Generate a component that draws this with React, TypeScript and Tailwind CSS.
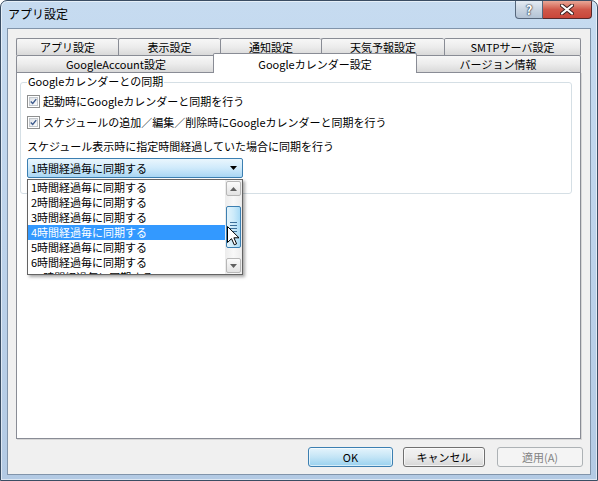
import React from "react";

function Tab({ label, w, last }: { label: string; w: number; last?: boolean }) {
  return (
    <div
      style={{ width: w }}
      className={
        "h-full flex items-center justify-center border-t border-l border-[#898c95] rounded-t-[2px] bg-gradient-to-b from-[#f7f7f7] via-[#ececec] to-[#d9d9d9] " +
        (last ? "border-r" : "")
      }
    >
      <span className="leading-none">{label}</span>
    </div>
  );
}

function CheckBox() {
  return (
    <div className="w-[13px] h-[13px] border border-[#8e8f8f] bg-white p-[1px] shrink-0">
      <div className="w-full h-full border border-[#c2c7cc] bg-gradient-to-br from-[#dfe3e8] to-[#fbfbfb] flex items-center justify-center">
        <svg width="9" height="9" viewBox="0 0 9 9">
          <path d="M1 4.5 L3.5 7 L8 1.5" fill="none" stroke="#3d5a8c" strokeWidth="1.8" />
        </svg>
      </div>
    </div>
  );
}

function ScrollBtn({ up }: { up?: boolean }) {
  return (
    <div className="h-[17px] p-[1px]">
      <div className="w-full h-full rounded-[2px] border border-[#b7b7b7] bg-gradient-to-b from-[#fbfbfb] to-[#e3e3e3] flex items-center justify-center">
        <svg width="7" height="4" viewBox="0 0 7 4">
          {up ? <path d="M0 4 L3.5 0 L7 4 Z" fill="#606060" /> : <path d="M0 0 L7 0 L3.5 4 Z" fill="#606060" />}
        </svg>
      </div>
    </div>
  );
}

const items = [
  "1時間経過毎に同期する",
  "2時間経過毎に同期する",
  "3時間経過毎に同期する",
  "4時間経過毎に同期する",
  "5時間経過毎に同期する",
  "6時間経過毎に同期する",
  "10時間経過毎に同期する",
];

export default function App() {
  return (
    <div className="w-[598px] h-[481px] bg-white">
      <div className="relative w-[598px] h-[481px] rounded-t-[7px] border border-[#3a4d63] bg-gradient-to-b from-[#c6dbf0] via-[#bdd3eb] to-[#b3cae4] shadow-[inset_0_0_0_1px_rgba(255,255,255,0.55)] flex flex-col font-['Noto_Sans_CJK_JP','Noto_Sans',sans-serif] text-[11px] text-black leading-none overflow-hidden">
        {/* title bar */}
        <div className="h-[27px] shrink-0 flex items-start">
          <div className="pl-[7px] pt-[7px] text-[12px] leading-none text-black">アプリ設定</div>
          <div className="ml-auto mr-[5px] flex">
            <div className="w-[28px] h-[18px] rounded-bl-[4px] border border-t-0 border-[#56677c] bg-gradient-to-b from-[#e4ebf3] via-[#c9d5e2] to-[#b3c3d5] flex items-center justify-center">
              <span className="text-[13px] font-bold text-white leading-none [text-shadow:0_0_1px_#2a3a4c,0_0_1px_#2a3a4c,0_0_2px_#2a3a4c]">?</span>
            </div>
            <div className="w-[49px] h-[18px] rounded-br-[4px] border border-l-0 border-t-0 border-[#56282a] bg-gradient-to-b from-[#e8a797] via-[#d0584a] to-[#c9463a] flex items-center justify-center">
              <svg width="14" height="11" viewBox="0 0 14 11">
                <path d="M2 1.5 L12 9.5 M12 1.5 L2 9.5" stroke="#3b2020" strokeWidth="4" strokeLinecap="round" />
                <path d="M2 1.5 L12 9.5 M12 1.5 L2 9.5" stroke="#ffffff" strokeWidth="2.2" strokeLinecap="round" />
              </svg>
            </div>
          </div>
        </div>

        {/* client */}
        <div className="ml-[6px] w-[584px] h-[447px] shrink-0 border border-[#8194aa] bg-[#f0f0f0] pt-[9px] pl-[8px] flex flex-col">
          <div className="relative w-[565px]">
            <div className="flex h-[17px]">
              <Tab label="アプリ設定" w={102} />
              <Tab label="表示設定" w={102} />
              <Tab label="通知設定" w={101} />
              <Tab label="天気予報設定" w={123} />
              <Tab label="SMTPサーバ設定" w={137} last />
            </div>
            <div className="flex h-[17px]">
              <Tab label="GoogleAccount設定" w={199} />
              <Tab label="Googleカレンダー設定" w={200} />
              <Tab label="バージョン情報" w={166} last />
            </div>
            <div className="absolute left-[197px] top-[15px] w-[204px] h-[20px] z-10 bg-white border-t border-l border-r border-[#898c95] rounded-t-[2px] flex items-start justify-center pt-[5px]">
              <span className="leading-none">Googleカレンダー設定</span>
            </div>

            {/* panel */}
            <div className="w-[565px] h-[367px] border border-[#898c95] bg-white shadow-[1px_1px_0_#d6d6d6] pt-[9px] pl-[3px]">
              {/* groupbox */}
              <div className="relative w-[552px] h-[112px] border border-[#d5dfe5] rounded-[3px]">
                <div className="absolute left-[6px] top-[-7px] bg-white px-[1px] leading-none">
                  Googleカレンダーとの同期
                </div>
                <div className="flex flex-col pl-[6px] pt-[12px]">
                  <div className="flex items-center gap-[3px] h-[13px]">
                    <CheckBox />
                    <span>起動時にGoogleカレンダーと同期を行う</span>
                  </div>
                  <div className="flex items-center gap-[3px] h-[13px] mt-[8px]">
                    <CheckBox />
                    <span>スケジュールの追加／編集／削除時にGoogleカレンダーと同期を行う</span>
                  </div>
                  <div className="mt-[12px] h-[11px] leading-none">
                    スケジュール表示時に指定時間経過していた場合に同期を行う
                  </div>
                  {/* combo */}
                  <div className="relative mt-[6px] w-[216px] h-[20px]">
                    <div className="w-full h-full border border-[#3c7fb1] rounded-[2px] bg-gradient-to-b from-[#eaf6fd] via-[#cfeafb] to-[#a9d6f3] flex items-center pl-[3px] pr-[5px]">
                      <span className="flex-1">1時間経過毎に同期する</span>
                      <svg width="7" height="4" viewBox="0 0 7 4">
                        <path d="M0 0 L7 0 L3.5 4 Z" fill="#000" />
                      </svg>
                    </div>
                    {/* dropdown list */}
                    <div className="absolute left-0 top-[21px] z-20 w-[216px] h-[96px] border border-[#646464] bg-white shadow-[2px_2px_3px_rgba(0,0,0,0.35)] flex">
                      <div className="w-[197px] h-full overflow-hidden">
                        {items.map((t, i) => (
                          <div
                            key={t}
                            className={
                              "h-[15px] flex items-center pl-[3px] " +
                              (i === 3 ? "bg-[#3399ff] text-white" : "text-black")
                            }
                          >
                            {t}
                          </div>
                        ))}
                      </div>
                      <div className="w-[17px] h-full flex flex-col bg-gradient-to-r from-[#ececec] via-[#f8f8f8] to-[#ececec]">
                        <ScrollBtn up />
                        <div className="flex-1 px-[1px] pt-[9px]">
                          <div className="h-[42px] rounded-[2px] border border-[#3c7fb1] bg-gradient-to-r from-[#e3f4fc] via-[#cdebfa] to-[#a9dbf6] flex flex-col items-center justify-center gap-[2px]">
                            <div className="w-[7px] h-[1px] bg-[#3c6f99]" />
                            <div className="w-[7px] h-[1px] bg-[#3c6f99]" />
                            <div className="w-[7px] h-[1px] bg-[#3c6f99]" />
                            <div className="w-[7px] h-[1px] bg-[#3c6f99]" />
                          </div>
                        </div>
                        <ScrollBtn />
                      </div>
                    </div>
                    {/* mouse cursor */}
                    <svg className="absolute left-[200px] top-[68px] z-30" width="13" height="20" viewBox="0 0 13 20">
                      <path d="M0.5 0.5 L0.5 16.5 L4.5 12.7 L7.3 18.8 L9.6 17.8 L6.9 11.8 L12 11.8 Z" fill="#fff" stroke="#000" strokeWidth="1" strokeLinejoin="round" />
                    </svg>
                  </div>
                </div>
              </div>
            </div>
          </div>

          {/* buttons */}
          <div className="mt-[8px] flex justify-end pr-[7px]">
            <div className="w-[85px] h-[20px] mr-[10px] rounded-[3px] border border-[#3c7fb1] bg-gradient-to-b from-[#e5f4fc] via-[#c4e5f6] to-[#98d1ef] shadow-[inset_0_0_0_1px_rgba(255,255,255,0.6)] flex items-center justify-center">
              OK
            </div>
            <div className="w-[82px] h-[20px] mr-[12px] rounded-[3px] border border-[#707070] bg-gradient-to-b from-[#f2f2f2] via-[#ebebeb] to-[#d6d6d6] shadow-[inset_0_0_0_1px_rgba(255,255,255,0.7)] flex items-center justify-center">
              キャンセル
            </div>
            <div className="w-[86px] h-[20px] rounded-[3px] border border-[#adb2b5] bg-[#f4f4f4] text-[#838383] flex items-center justify-center">
              適用(A)
            </div>
          </div>
        </div>
      </div>
    </div>
  );
}
